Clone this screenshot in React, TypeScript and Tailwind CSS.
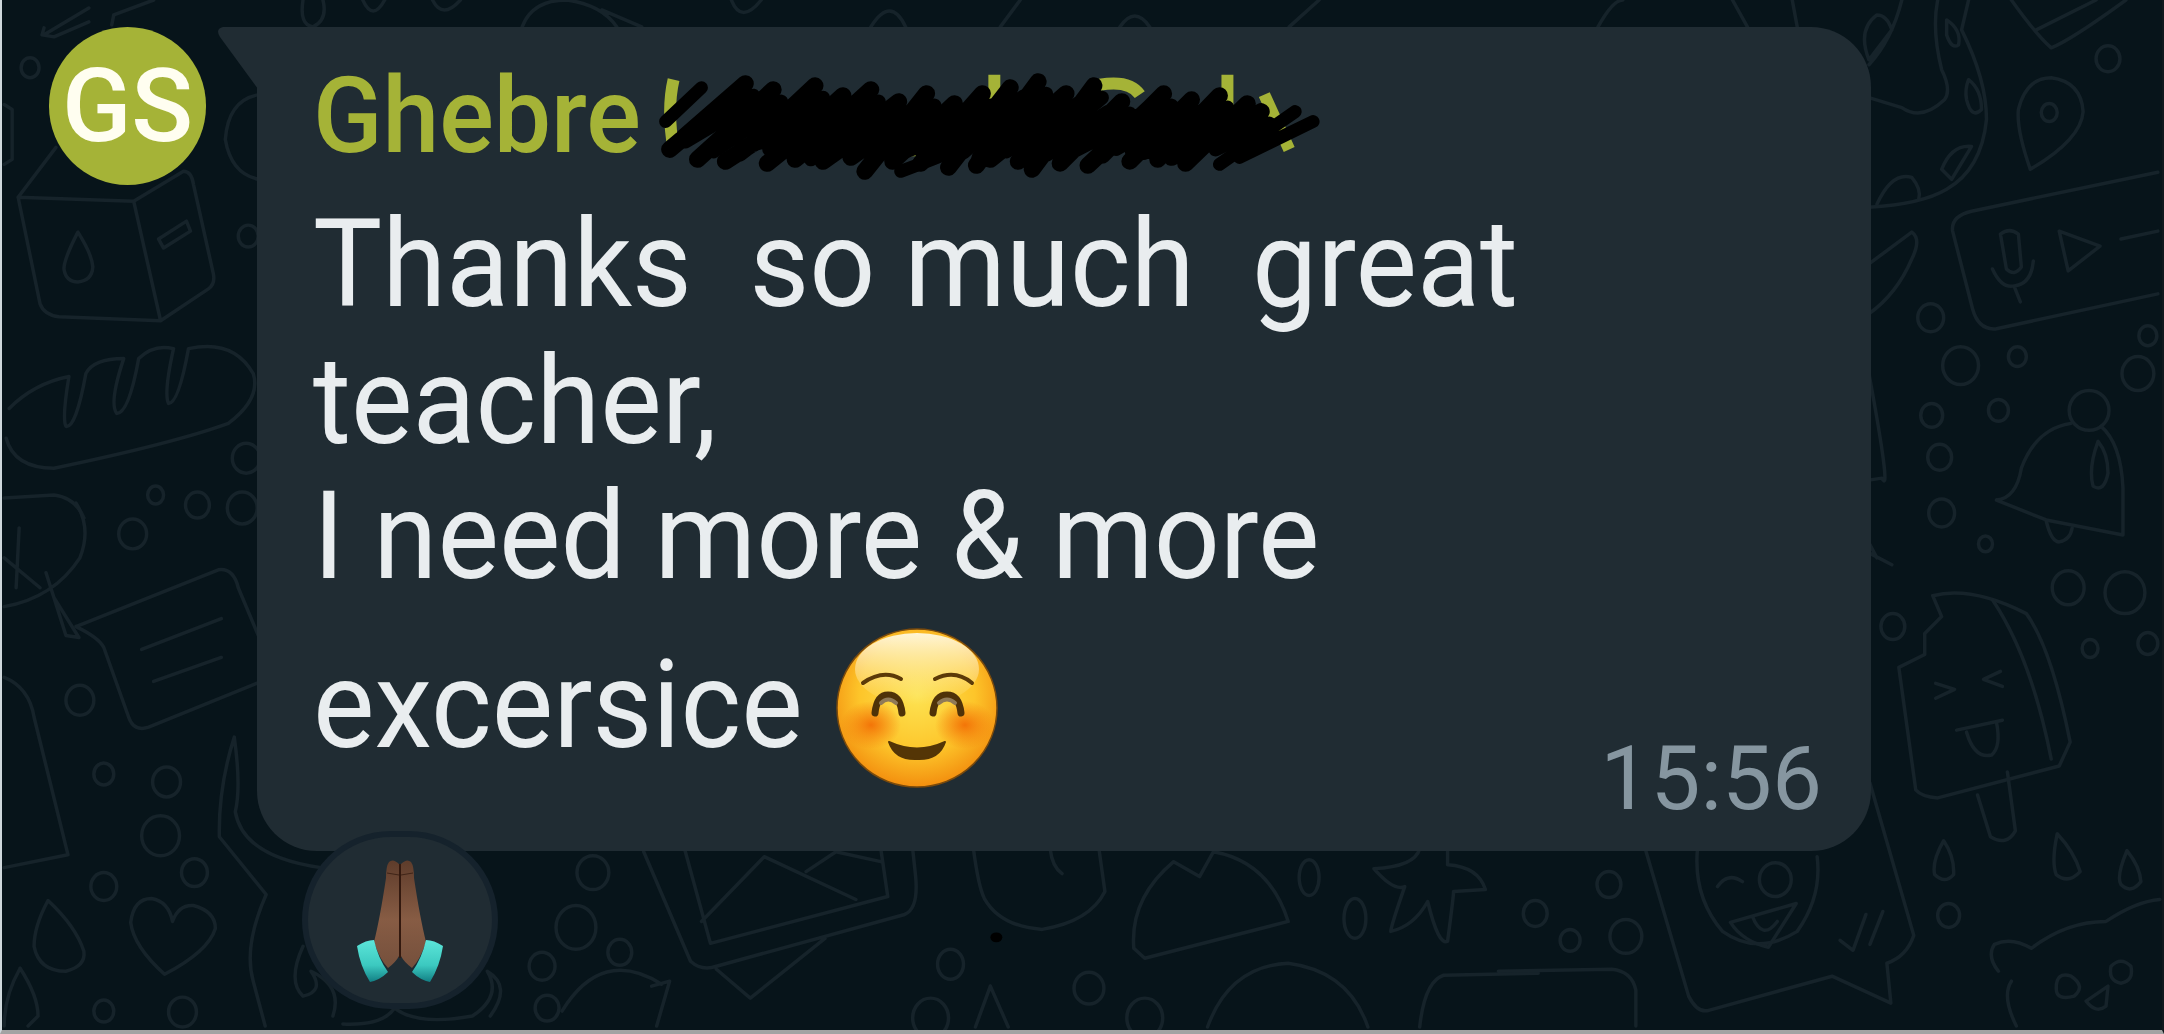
const circles: number[][] = [
  [26, 68, 9, 10], [2112, 59, 12, 13], [1934, 319, 13, 14], [1964, 367, 18, 19], [2021, 358, 9, 10],
  [1935, 417, 11, 12], [2002, 412, 10, 11], [1943, 459, 12, 13], [2142, 375, 16, 17], [2152, 337, 9, 10],
  [2053, 113, 8, 9], [1945, 515, 13, 14], [1989, 546, 7, 8], [2072, 590, 16, 17], [2129, 595, 20, 21],
  [1896, 629, 12, 13], [2094, 651, 8, 9], [2152, 646, 10, 11], [1952, 919, 11, 12], [1611, 888, 12, 13],
  [1537, 917, 12, 13], [1572, 944, 10, 11], [1628, 940, 16, 17], [129, 536, 14, 15], [194, 507, 12, 13],
  [239, 510, 15, 16], [76, 703, 14, 15], [100, 777, 10, 11], [163, 785, 14, 15], [157, 839, 19, 20],
  [191, 876, 13, 14], [100, 890, 13, 14], [100, 1015, 10, 11], [179, 1016, 14, 15], [591, 876, 16, 17],
  [574, 931, 20, 22], [618, 956, 12, 13], [540, 970, 13, 14], [545, 1012, 12, 13], [1310, 881, 10, 18],
  [1356, 922, 11, 20], [950, 968, 13, 15], [1089, 992, 15, 16], [1145, 1022, 18, 20], [930, 1022, 18, 20],
  [1778, 883, 16, 17], [152, 497, 8, 9], [245, 237, 10, 11], [243, 460, 14, 15], [2093, 412, 20, 20],
];

const doodles = [
  // milk carton
  "M14 198 L130 202 L157 322 L55 318 Q40 316 36 305 Z M14 198 L52 148 M130 202 L180 172 Q188 172 190 185 L210 275 Q212 285 205 290 L157 322",
  "M74 233 Q60 260 60 270 Q62 283 74 283 Q88 282 89 268 Q88 255 74 233 Z M155 240 L183 222 L187 232 L160 249 Z",
  "M40 35 L85 8 M40 28 L38 35 L50 37 L85 22 M110 15 L150 0 M110 15 L108 25",
  // bread
  "M5 410 Q30 385 65 378 Q58 420 62 428 Q72 430 82 375 Q90 360 120 360 Q105 405 113 415 Q125 415 135 360 Q150 345 170 350 Q160 395 165 405 Q175 405 185 350 Q230 340 250 375 Q258 400 225 425 Q170 445 50 470 Q10 470 2 440",
  "M0 500 L50 497 Q72 500 80 520",
  // note
  "M72 629 L215 572 Q230 570 235 590 L256 640 M256 685 L145 730 Q130 735 125 720 L100 650 Q95 640 72 629",
  "M138 652 L218 621 M150 684 L218 660",
  // leaf
  "M0 609 Q50 600 76 560 Q88 530 72 505 M0 560 L36 590 M15 530 L12 590 M50 600 L75 640 L62 638 L42 575",
  // phone and waves
  "M0 680 Q25 690 30 720 L64 858 L0 871",
  "M231 740 Q215 790 216 840 L263 898 Q240 950 250 985 L262 1030 M231 740 Q238 790 232 815 Q240 860 318 871",
  "M44 904 Q30 930 30 950 Q35 975 62 975 Q82 970 80 955 Q72 930 44 904 Z M161 978 Q130 950 127 926 Q130 902 148 902 Q165 905 169 925 Q175 908 190 909 Q212 915 212 932 Q205 955 161 978 Z",
  "M16 972 Q0 1000 0 1030 M16 972 Q34 1000 34 1020 L24 1030",
  // hearts under the reaction
  "M300 950 Q284 985 300 1000 Q322 995 308 975 Q340 990 330 1020 M340 1028 Q380 1030 392 1012 Q415 1030 470 1020 Q500 1000 485 975 Q510 990 488 1020",
  "M560 1015 Q600 950 660 988",
  // envelope
  "M683 852 L709 947 L887 900 L880 852 M700 925 L763 860 L855 903 M805 875 L835 855 L880 865",
  "M642 855 L689 965 Q700 975 715 970 L904 918 Q918 912 915 880 L912 852 M715 973 L749 1002 L824 942 M650 990 L668 985 L655 1030",
  // ghost
  "M973 852 Q978 890 984 902 Q1000 930 1042 933 Q1090 925 1105 895 L1099 852 M1050 852 Q1052 870 1062 877",
  // slice and star
  "M1174 865 L1200 880 L1214 855 Q1270 865 1289 925 L1145 962 L1134 952 Q1130 902 1174 865 Z",
  "M1421 852 Q1416 870 1375 872 Q1395 895 1406 890 Q1392 930 1392 935 Q1415 930 1429 905 Q1440 950 1449 945 Q1455 900 1455 895 L1487 893 Q1480 870 1449 868 L1449 852",
  // bottom row
  "M1208 1031 Q1230 970 1289 967 Q1350 975 1369 1031 M1540 977 L1445 979 Q1426 985 1421 1031 M990 990 L975 1031 M990 990 L1008 1031",
  "M1500 975 L1614 973 Q1634 975 1638 994 L1638 1030",
  // wink face and speech bubble
  "M1700 851 Q1695 900 1725 935 Q1760 960 1800 935 Q1825 900 1820 860",
  "M1733 926 L1799 907 L1771 951 Q1745 945 1733 926 Z M1755 920 Q1765 945 1780 925 M1720 890 Q1730 875 1745 885",
  "M1648 854 L1691 1000 Q1700 1018 1712 1014 L1835 980 L1894 1007 L1890 967 Q1910 960 1917 939 L1873 786",
  "M1843 944 L1856 954 L1869 918 M1873 948 L1886 915",
  // lolly
  "M1936 598 Q1975 588 2030 616 Q2055 650 2074 745 L2063 769 L1941 801 Q1925 800 1919 793 L1902 670 L1928 657 L1928 636 L1945 619 Z",
  "M1996 602 Q2035 660 2055 762 M1981 798 L1994 840 Q2010 850 2019 834 L2011 775",
  "M1939 686 L1958 692 L1939 701 M2004 674 L1987 682 L2006 689 M1960 733 L2006 723 M1970 735 Q1978 762 1995 758 Q2005 750 2000 725",
  // drops
  "M1947 844 Q1935 865 1938 878 Q1948 888 1957 878 Q1958 860 1947 844 Z M2061 837 Q2055 865 2060 878 Q2072 888 2084 875 Q2078 855 2061 837 Z M2131 854 Q2120 880 2125 888 Q2135 898 2145 885 Q2144 870 2131 854 Z",
  // bear
  "M2002 975 Q1990 960 1998 948 Q2015 940 2035 952 Q2070 925 2110 925 Q2140 905 2164 903",
  "M2020 1030 Q2005 1000 2015 985 M2060 992 Q2060 975 2075 980 Q2090 990 2078 1000 Q2060 1005 2060 992 Z M2115 970 Q2125 960 2135 970 Q2138 985 2125 987 Q2112 985 2115 970 Z M2090 1005 L2112 990 L2110 1010 Q2100 1018 2090 1005 Z",
  // bell
  "M2000 502 Q2020 500 2025 470 Q2040 430 2075 425 M2105 428 Q2125 445 2127 490 L2127 537 L2050 522 L2000 502",
  "M2050 523 Q2055 544 2063 544 Q2074 542 2076 530 M2102 443 Q2092 470 2097 488 Q2108 495 2112 475 Q2112 455 2102 443 Z",
  // record bar
  "M2162 173 L1975 212 Q1954 217 1956 232 L1976 310 Q1982 332 2000 330 L2162 295",
  "M2004 235 Q2013 228 2022 235 L2025 268 Q2018 278 2010 270 Z M1996 270 Q2005 290 2018 287 Q2035 285 2037 262 M2018 288 L2024 303 M2063 232 L2104 247 L2072 272 Z M2125 240 L2162 232",
  // pin
  "M2034 170 Q2020 130 2022 110 Q2030 78 2055 78 Q2085 82 2087 112 Q2085 140 2034 170 Z",
  // worm shape
  "M1941 0 Q1935 30 1945 70 Q1955 90 1948 100 Q1925 122 1905 108 L1872 98 M1972 0 L1965 30 Q1990 80 1990 120 Q1985 170 1950 190 Q1925 205 1872 208",
  "M1950 20 Q1965 30 1962 45 Q1955 50 1950 35 Z M1972 80 Q1985 90 1985 110 Q1975 120 1970 100 Q1968 90 1972 80 Z M1945 170 Q1955 145 1975 147 L1955 180 Z M1880 205 Q1895 172 1915 178 Q1925 190 1922 200",
  "M1872 60 Q1860 30 1880 15 Q1890 15 1895 30 L1872 60 M1905 0 Q1895 40 1872 65",
  "M2015 0 Q2040 35 2055 48 Q2075 40 2130 0 M2040 30 L2100 0",
  "M1872 265 L1915 233 Q1925 240 1915 260 Q1900 295 1872 315",
  "M1872 375 Q1895 500 1885 480 L1872 482 M1872 545 L1880 560 M1872 555 L1895 567",
  // top strip
  "M520 27 Q530 0 565 0 Q600 5 615 27 M600 10 L640 27 M870 27 Q890 -5 905 27 M1000 27 L1020 0 M1120 27 Q1135 5 1150 27 M1290 27 L1320 0",
  "M1600 27 Q1615 0 1625 0 M1750 27 L1735 0 M1800 27 L1795 0",
  "M300 0 Q296 25 310 27 Q325 20 320 0 M360 0 Q370 22 382 0 M430 0 Q440 20 458 0 M730 0 Q740 25 760 0",
  // bits peeking between avatar and bubble
  "M256 95 Q225 100 222 140 Q228 175 256 180",
  "M0 105 L8 110 L8 160 L0 165",
];

// the black scribble over the surname
const scribbleTop = [98, 84, 104, 90, 122, 106, 86, 114, 96, 110, 90, 118, 102, 114, 94, 124, 104, 116, 94, 112, 88, 98, 82, 110, 94, 104, 86, 114, 102, 118, 108, 94, 112, 100, 120, 96, 116, 104, 112];
const scribbleBottom = [150, 138, 160, 148, 162, 154, 144, 164, 152, 160, 146, 162, 150, 158, 172, 150, 162, 146, 164, 154, 168, 152, 166, 160, 148, 162, 170, 154, 164, 150, 166, 156, 148, 162, 152, 160, 158, 164, 148];
const scribblePath = scribbleTop
  .map((top, i) => `M${668 + i * 14} ${scribbleBottom[i]} L${730 + i * 14} ${top}`)
  .join(" ");
const scribbleFill = scribbleTop
  .map((top, i) => `M${684 + i * 14} ${scribbleBottom[(i + 5) % 39] - 12} L${738 + i * 14} ${top + 12}`)
  .join(" ");

const Background = () => (
  <svg className="absolute inset-0 h-full w-full" viewBox="0 0 2164 1034" fill="none" stroke="#16232a" strokeWidth="3.5" strokeLinecap="round" strokeLinejoin="round">
    {doodles.map((d, i) => (
      <path key={i} d={d} />
    ))}
    {circles.map(([cx, cy, rx, ry], i) => (
      <ellipse key={i} cx={cx} cy={cy} rx={rx} ry={ry} />
    ))}
    <ellipse cx="996" cy="941" rx="6" ry="5" fill="#000" stroke="none" />
  </svg>
);

const SmileEmoji = () => (
  <svg className="h-[162px] w-[164px] shrink-0" viewBox="0 0 164 162">
    <defs>
      <radialGradient id="face" cx="50%" cy="42%" r="60%">
        <stop offset="0%" stopColor="#fde352" />
        <stop offset="60%" stopColor="#fdc52a" />
        <stop offset="100%" stopColor="#f28a0c" />
      </radialGradient>
      <linearGradient id="shine" x1="0" y1="0" x2="0" y2="1">
        <stop offset="0%" stopColor="#fff8e0" stopOpacity="0.95" />
        <stop offset="100%" stopColor="#fff3b8" stopOpacity="0" />
      </linearGradient>
      <radialGradient id="blush">
        <stop offset="0%" stopColor="#f37508" stopOpacity="1" />
        <stop offset="100%" stopColor="#f37508" stopOpacity="0" />
      </radialGradient>
    </defs>
    <ellipse cx="82" cy="81" rx="80" ry="79" fill="url(#face)" stroke="#7a4a0c" strokeWidth="1.5" />
    <ellipse cx="82" cy="42" rx="62" ry="36" fill="url(#shine)" />
    <ellipse cx="36" cy="98" rx="30" ry="24" fill="url(#blush)" />
    <ellipse cx="130" cy="98" rx="30" ry="24" fill="url(#blush)" />
    <g fill="none" strokeLinecap="round">
      <path d="M28 56 Q48 42 66 52" stroke="#5c3a08" strokeWidth="4" />
      <path d="M100 52 Q120 42 137 56" stroke="#5c3a08" strokeWidth="4" />
      <path d="M40 86 Q42 68 53 68 Q65 68 67 86" stroke="#4f3208" strokeWidth="7" />
      <path d="M98 86 Q100 68 112 68 Q124 68 126 86" stroke="#4f3208" strokeWidth="7" />
      <path d="M46 76 Q53 69 61 76" stroke="#8f7a58" strokeWidth="4" />
      <path d="M104 76 Q112 69 120 76" stroke="#8f7a58" strokeWidth="4" />
    </g>
    <path d="M54 115 Q82 128 110 115 Q104 133 82 132 Q60 133 54 115 Z" fill="#543506" stroke="#543506" strokeWidth="2" strokeLinejoin="round" />
  </svg>
);

const PrayEmoji = () => (
  <svg className="h-[124px] w-[96px]" viewBox="0 0 96 124">
    <defs>
      <linearGradient id="skin" x1="0" y1="0" x2="0" y2="1">
        <stop offset="0%" stopColor="#5e3c2b" />
        <stop offset="55%" stopColor="#875c44" />
        <stop offset="100%" stopColor="#75503c" />
      </linearGradient>
      <linearGradient id="cuff" x1="0" y1="0" x2="0" y2="1">
        <stop offset="0%" stopColor="#5ce6d9" />
        <stop offset="60%" stopColor="#3cc9c0" />
        <stop offset="100%" stopColor="#127f84" />
      </linearGradient>
    </defs>
    <path d="M47 6 Q41 0 37 4 Q34 8 34 20 Q28 60 22 84 Q28 102 36 110 Q44 104 47 98 Z" fill="url(#skin)" />
    <path d="M49 6 Q55 0 59 4 Q62 8 62 20 Q68 60 74 84 Q68 102 60 110 Q52 104 49 98 Z" fill="url(#skin)" />
    <path d="M48 6 L48 100" stroke="#33190f" strokeWidth="2" />
    <path d="M35 15 L47 17 M61 15 L49 17" stroke="#3f2417" strokeWidth="1" />
    <path d="M5 88 Q14 82 22 82 Q26 100 36 114 Q28 122 18 124 Q8 108 5 88 Z" fill="url(#cuff)" />
    <path d="M91 88 Q82 82 74 82 Q70 100 60 114 Q68 122 78 124 Q88 108 91 88 Z" fill="url(#cuff)" />
  </svg>
);

const App = () => {
  return (
    <div className="relative h-[1034px] w-[2164px] overflow-hidden border-r-2 border-b-4 border-l-2 border-r-[#10181d] border-b-[#a3a3a3] border-l-[#cfd8dc] bg-[#07141a] font-['Roboto',sans-serif]">
      <Background />
      <div className="absolute top-[37px] right-[-2px] h-[10px] w-[2px] bg-[#6a4fc0]" />

      <div className="relative flex items-start pt-[27px] pl-[47px]">
        {/* Avatar */}
        <div className="flex h-[158px] w-[157px] shrink-0 items-center justify-center rounded-full bg-[#a5b337] text-[102px] font-medium text-[#fffef0]">
          GS
        </div>

        {/* Bubble */}
        <div className="relative ml-[51px] h-[824px] w-[1614px] rounded-[60px] rounded-tl-none bg-[#202c33] pt-[39px] pl-[56px]">
          <svg className="absolute top-0 left-[-39px] h-[62px] w-[40px]" viewBox="0 0 40 62">
            <path d="M40 0 L5 0 Q-3 2 2 10 L40 62 Z" fill="#202c33" />
          </svg>

          {/* Sender */}
          <div className="h-[100px] origin-center scale-y-[1.04] text-[102px] leading-[100px] font-medium text-[#a5b337]">
            Ghebre
          </div>

          {/* Message */}
          <div className="mt-[31px] origin-top scale-y-[1.05] text-[116px] leading-[129.5px] whitespace-pre-wrap text-[#e9edef]">
            {"Thanks  so much  great\nteacher,\nI need more & more"}
          </div>
          <div className="mt-[41px] flex h-[162px] items-center gap-[32px] text-[116px] leading-[129.5px] text-[#e9edef]">
            <span className="scale-y-[1.05] pb-[4px]">excersice</span>
            <SmileEmoji />
          </div>

          {/* Time */}
          <div className="absolute right-[49px] bottom-[28px] text-[89px] leading-none font-normal text-[#8696a0]">
            15:56
          </div>

          {/* Reaction */}
          <div className="absolute bottom-[-158px] left-[45px] flex h-[178px] w-[196px] items-center justify-center rounded-full border-[6px] border-[#15222c] bg-[#202c33]">
            <PrayEmoji />
          </div>
        </div>
      </div>

      {/* Redaction scribble */}
      <svg className="absolute inset-0 h-full w-full" viewBox="0 0 2164 1034" fill="none">
        <path d="M672 80 Q665 110 672 150 M994 75 L994 150 M1228 75 L1228 150 M850 152 L950 150 M1100 85 Q1130 80 1140 95 M1265 95 L1290 150" stroke="#a5b337" strokeWidth="12" />
        <path d={scribblePath} stroke="#000" strokeWidth="17" strokeLinecap="round" />
        <path d={scribbleFill} stroke="#000" strokeWidth="14" strokeLinecap="round" />
        <path d="M664 122 L700 88 M900 172 Q960 150 1000 130 M1240 158 L1314 122 M1220 165 L1296 112" stroke="#000" strokeWidth="13" strokeLinecap="round" />
      </svg>
    </div>
  );
};

export default App;
